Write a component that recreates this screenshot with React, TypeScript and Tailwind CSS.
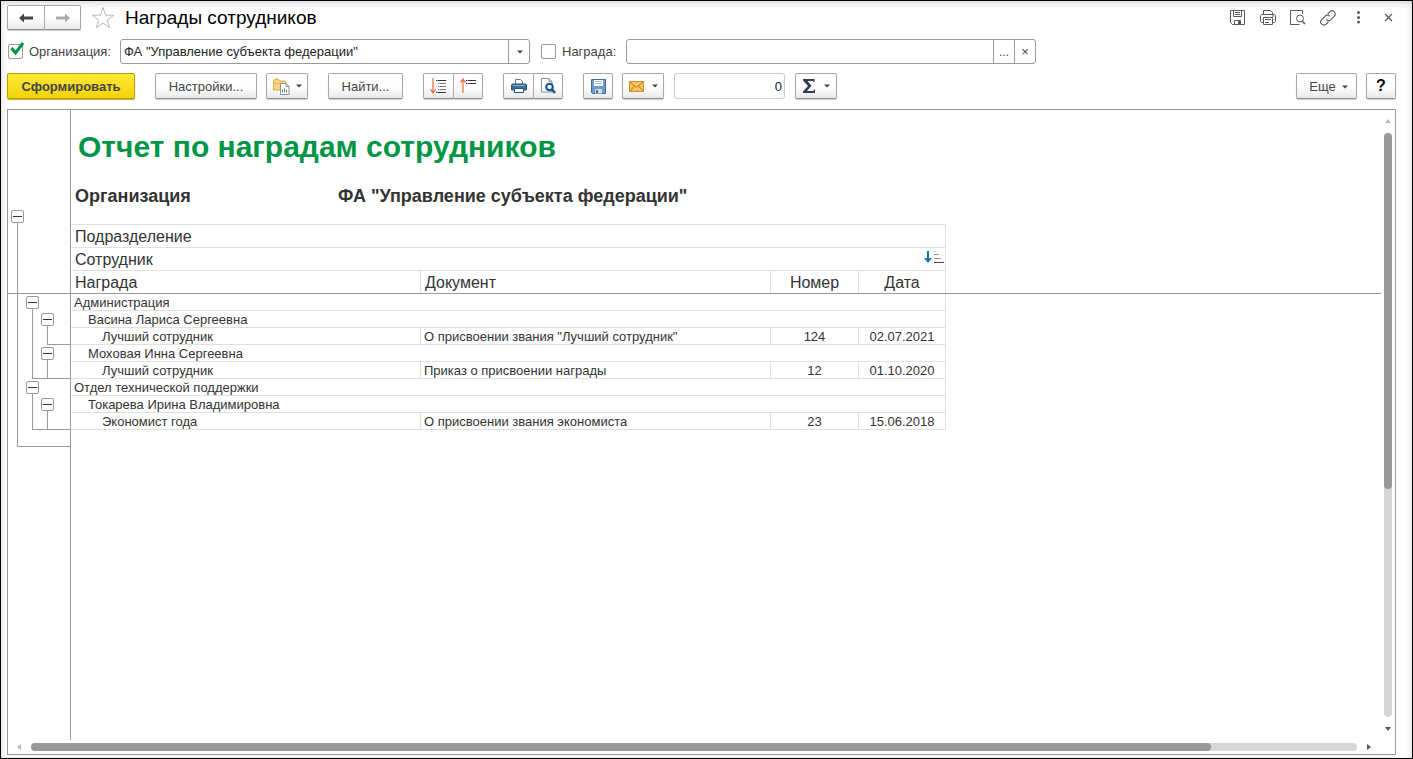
import { ButtonHTMLAttributes, ReactNode, useState } from "react";
import clsx from "clsx";

interface Award {
  title: string;
  document: string;
  number: string;
  date: string;
}

interface Employee {
  name: string;
  awards: Award[];
}

interface Department {
  name: string;
  employees: Employee[];
}

const departments: Department[] = [
  {
    name: "Администрация",
    employees: [
      {
        name: "Васина Лариса Сергеевна",
        awards: [
          {
            title: "Лучший сотрудник",
            document: 'О присвоении звания "Лучший сотрудник"',
            number: "124",
            date: "02.07.2021",
          },
        ],
      },
      {
        name: "Моховая Инна Сергеевна",
        awards: [
          {
            title: "Лучший сотрудник",
            document: "Приказ о присвоении награды",
            number: "12",
            date: "01.10.2020",
          },
        ],
      },
    ],
  },
  {
    name: "Отдел технической поддержки",
    employees: [
      {
        name: "Токарева Ирина Владимировна",
        awards: [
          {
            title: "Экономист года",
            document: "О присвоении звания экономиста",
            number: "23",
            date: "15.06.2018",
          },
        ],
      },
    ],
  },
];

/* ---------- icons ---------- */

const Arrow = ({ className }: { className?: string }) => (
  <svg width="14" height="10" viewBox="0 0 14 10" className={className}>
    <path d="M0 5l5-4.500v3H14v3H5v3z" fill="currentColor" />
  </svg>
);

const Caret = () => (
  <svg width="6" height="4" viewBox="0 0 6 4" className="shrink-0">
    <path d="M0 .5h6L3 3.500z" fill="#444" />
  </svg>
);

const StarIcon = () => (
  <svg width="24" height="24" viewBox="0 0 24 24">
    <path
      d="m12 1.500 2.700 7.700h8l-6.400 4.900 2.400 7.700-6.700-4.700-6.700 4.700 2.400-7.700L1.300 9.200h8z"
      fill="#fff"
      stroke="#b3b8bd"
    />
  </svg>
);

const FolderIcon = () => (
  <svg width="17" height="17" viewBox="0 0 17 17">
    <path d="M.5 12V3L2 1h3l1.500 2H12l1 1v8z" fill="#f7d57e" stroke="#dba741" />
    <path d="M1 5.500h11.500" stroke="#e3b452" />
    <path d="M7.500 5.500h5.500l3 3v8H7.500z" fill="#fff" stroke="#7d93a8" />
    <path d="M13 5.500v3h3" fill="none" stroke="#7d93a8" />
    <path d="M9.500 14.500v-3" stroke="#3b9b57" />
    <path d="M11.500 14.500v-4" stroke="#e0524b" />
    <path d="M13.500 14.500v-3" stroke="#3b9b57" />
  </svg>
);

const ExpandIcon = () => (
  <svg width="17" height="16" viewBox="0 0 17 16">
    <path d="M3 0v15M.5 11.500 3 15l2.500-3.500" fill="none" stroke="#f3743c" strokeWidth="1.300" />
    <path d="M6 2.500h1.500M8 2.500h8" stroke="#333" />
    <path d="M8 5.500h1.500M10 5.500h6M8 8.500h1.500M10 8.500h6M8 11.500h1.500M10 11.500h6" stroke="#777" />
    <path d="M6 14.500h1.500M8 14.500h8" stroke="#333" />
  </svg>
);

const CollapseIcon = () => (
  <svg width="17" height="16" viewBox="0 0 17 16">
    <path d="M3 15V1M.5 4.500 3 1l2.500 3.500" fill="none" stroke="#f3743c" strokeWidth="1.300" />
    <path d="M6 2.500h1.500M8 2.500h8M6 5.500h1.500M8 5.500h8" stroke="#333" />
  </svg>
);

const PrintIcon = () => (
  <svg width="16" height="14" viewBox="0 0 16 14">
    <path d="M4.500 6V.5h5l2 2V6" fill="#fff" stroke="#5d7c99" />
    <path d="M1.500 5h13l1 1v5h-15V6z" fill="#3f6f9f" stroke="#24527c" />
    <path d="M2 6.500h12" stroke="#8fb3d4" />
    <path d="M3.500 9.500h9v4h-9z" fill="#fff" stroke="#24527c" />
  </svg>
);

const PreviewIcon = () => (
  <svg width="15" height="16" viewBox="0 0 15 16">
    <path d="M.5.500H8l3 3v10.500H.5z" fill="#fff" stroke="#7d93a8" />
    <path d="M8 .5v3h3" fill="none" stroke="#7d93a8" />
    <circle cx="8.500" cy="9" r="3.300" fill="#e3eef6" stroke="#135283" strokeWidth="2" />
    <path d="m11 11.500 3 3.500" stroke="#135283" strokeWidth="2.500" />
  </svg>
);

const SaveIcon = () => (
  <svg width="15" height="15" viewBox="0 0 15 15">
    <path d="M.5.500h14v14H1.500l-1-1z" fill="#6f9bcb" stroke="#3f6c9e" />
    <path d="M3 1h9v6H3z" fill="#fff" />
    <path d="M4 2.500h7M4 4.500h7" stroke="#a9bfd6" />
    <path d="M4 10h7v4.500H4z" fill="#d8dde2" />
    <path d="M5 11h2v3H5z" fill="#3f6c9e" />
  </svg>
);

const MailIcon = () => (
  <svg width="15" height="11" viewBox="0 0 15 11">
    <path d="M.5.500h14v10H.5z" fill="#f6c566" stroke="#cd8e22" />
    <path d="m1 1 6.500 5.500L14 1M1 10l4.500-5M14 10 9.500 5" fill="none" stroke="#b87813" />
  </svg>
);

const SigmaIcon = () => (
  <svg width="13" height="14" viewBox="0 0 13 14">
    <path d="M0 0h11.500v3h-1L10 2H4.500l4 4.700L4 12h6.500l.5-1.500h1V14H0v-1.500L5 7 0 1.500z" fill="#2c3e50" />
  </svg>
);

const SortIcon = () => (
  <svg width="20" height="15" viewBox="0 0 20 15">
    <path d="M3 1h2v7h3l-4 5-4-5h3z" fill="#1c72b8" />
    <path d="M10 1.500h2" stroke="#a8ccd8" />
    <path d="M10 4.500h5M10 8.500h7" stroke="#999" />
    <path d="M10 12.500h10" stroke="#444" />
  </svg>
);

const TitleSave = () => (
  <svg width="16" height="16" viewBox="0 0 16 16" fill="none" stroke="#5a5a5a">
    <path d="M.5.500h14v14H2.500l-2-2zM3.500.500v6h8v-6M5 2.500h5M5 4.500h5M4.500 14.500v-4h6v4" />
    <path d="M8 11h2v3H8z" fill="#5a5a5a" stroke="none" />
  </svg>
);

const TitlePrint = () => (
  <svg width="16" height="16" viewBox="0 0 16 16" fill="none" stroke="#5a5a5a">
    <path d="M3.500 4.500v-4h7l2 2v2M3.500 12.500h-2l-1-1v-6l1-1h13l1 1v6l-1 1h-2M3.500 7.500h9v7h-9zM5 9.500h6M5 12.500h4M12 6h2" />
  </svg>
);

const TitlePreview = () => (
  <svg width="16" height="16" viewBox="0 0 16 16" fill="none" stroke="#5a5a5a">
    <path d="M12.500 4V.5H.5v14h9" />
    <circle cx="10" cy="8.500" r="3.500" />
    <path d="m12.300 11.300 2.700 2.700" strokeWidth="1.600" />
  </svg>
);

const TitleLink = () => (
  <svg width="16" height="16" viewBox="0 0 24 24" fill="none" stroke="#5a5a5a" strokeWidth="1.700">
    <path d="M9.500 14.500a5 5 0 0 0 7 0l5-5a4.600 4.600 0 0 0-6.800-6.800L11.500 6" />
    <path d="M14.500 9.500a5 5 0 0 0-7 0l-5 5a4.600 4.600 0 0 0 6.800 6.800l3.200-3.300" />
  </svg>
);

const TitleMore = () => (
  <svg width="16" height="16" viewBox="0 0 16 16" fill="#5a5a5a">
    <circle cx="8.500" cy="2.500" r="1.500" />
    <circle cx="8.500" cy="7.500" r="1.500" />
    <circle cx="8.500" cy="12" r="1.500" />
  </svg>
);

const TitleClose = () => (
  <svg width="16" height="16" viewBox="0 0 16 16" stroke="#5a5a5a" strokeWidth="1.200">
    <path d="m5 4 7 7M12 4l-7 7" />
  </svg>
);

const titleActions = [
  { label: "Сохранить", icon: <TitleSave /> },
  { label: "Печать", icon: <TitlePrint /> },
  { label: "Просмотр", icon: <TitlePreview /> },
  { label: "Получить ссылку", icon: <TitleLink /> },
  { label: "Действия", icon: <TitleMore /> },
  { label: "Закрыть", icon: <TitleClose /> },
];

/* ---------- controls ---------- */

const raised =
  "flex items-center justify-center border border-[#a6a6a6] border-b-[#8c8c8c] bg-linear-to-b from-white from-50% to-[#e9e9e9] shadow-[0_1px_1px_#d0d0d0]";

const ToolButton = ({
  className,
  children,
  ...rest
}: ButtonHTMLAttributes<HTMLButtonElement>) => (
  <button
    type="button"
    className={clsx(raised, "h-[26px] shrink-0 rounded-xs text-[#444]", className)}
    {...rest}
  >
    {children}
  </button>
);

const ButtonPair = ({ children }: { children: ReactNode }) => (
  <div className="flex shrink-0 [&>button:first-child]:rounded-r-none [&>button:last-child]:rounded-l-none [&>button:last-child]:border-l-0">
    {children}
  </div>
);

const Check = ({ id, defaultChecked }: { id: string; defaultChecked?: boolean }) => (
  <span className="relative flex size-[15px] shrink-0">
    <input
      id={id}
      type="checkbox"
      defaultChecked={defaultChecked}
      className="peer size-[15px] appearance-none rounded-xs border border-[#999] bg-white"
    />
    <svg
      viewBox="0 0 16 16"
      className="pointer-events-none absolute -top-1 left-0.5 hidden size-4 peer-checked:block"
    >
      <path d="m1.500 8 4 5L13 3" fill="none" stroke="#009646" strokeWidth="3" />
    </svg>
  </span>
);

/* A bracket in the outline: the toggle, the line below it and the hook to the right */
const Branch = ({ label, children }: { label: string; children: ReactNode }) => (
  <div className="flex">
    <div className="flex w-[15px] shrink-0 flex-col pt-0.5">
      <button
        type="button"
        aria-label={label}
        className="flex size-[13px] shrink-0 items-center justify-center rounded-xs border border-[#999] bg-white"
      >
        <span className="h-px w-[9px] bg-[#333]" />
      </button>
      <div className="ml-1.5 flex-1 border-b border-l border-[#999]" />
    </div>
    <div className="flex-1 shadow-[inset_0_-1px_0_#999]">{children}</div>
  </div>
);

const Outline = () => (
  <div className="w-[63px] shrink-0 border-r border-[#999] pt-[98px] pl-[3px]">
    <Branch label="Свернуть отчет">
      <div className="h-[86px]" />
      {departments.map((department) => (
        <Branch key={department.name} label={`Свернуть ${department.name}`}>
          <div className="h-[17px]" />
          {department.employees.map((employee) => (
            <Branch key={employee.name} label={`Свернуть ${employee.name}`}>
              <div className="h-[17px]" />
              {employee.awards.map((award) => (
                <div key={award.date} className="h-[17px]" />
              ))}
            </Branch>
          ))}
        </Branch>
      ))}
      <div className="h-[17px]" />
    </Branch>
  </div>
);

const head = "h-[23px] border-r border-b border-[#e0e0e0] px-1 pt-0.5 text-base/5 font-normal";
const cell = "h-[17px] border-r border-b border-[#e0e0e0] px-[3px] pt-0.5 text-[13px]/[14px]";

const ReportTable = () => (
  <table className="w-[875px] table-fixed border-separate border-spacing-0 border-t border-[#e0e0e0] text-left text-[#333]">
    <colgroup>
      <col className="w-[350px]" />
      <col className="w-[350px]" />
      <col className="w-[88px]" />
      <col className="w-[87px]" />
    </colgroup>
    <thead>
      <tr>
        <th colSpan={4} className={head}>
          Подразделение
        </th>
      </tr>
      <tr>
        <th colSpan={4} className={clsx(head, "pr-px")}>
          <div className="flex items-start justify-between">
            Сотрудник
            <SortIcon />
          </div>
        </th>
      </tr>
      <tr>
        <th className={head}>Награда</th>
        <th className={head}>Документ</th>
        <th className={clsx(head, "text-center")}>Номер</th>
        <th className={clsx(head, "text-center")}>Дата</th>
      </tr>
    </thead>
    {departments.map((department) => (
      <tbody key={department.name}>
        <tr>
          <td colSpan={4} className={cell}>
            {department.name}
          </td>
        </tr>
        {department.employees.map((employee) => [
          <tr key={employee.name}>
            <td colSpan={4} className={clsx(cell, "pl-[17px]")}>
              {employee.name}
            </td>
          </tr>,
          ...employee.awards.map((award) => (
            <tr key={employee.name + award.date}>
              <td className={clsx(cell, "pl-[31px]")}>{award.title}</td>
              <td className={cell}>{award.document}</td>
              <td className={clsx(cell, "text-center")}>{award.number}</td>
              <td className={clsx(cell, "text-center")}>{award.date}</td>
            </tr>
          )),
        ])}
      </tbody>
    ))}
  </table>
);

const App = () => {
  const [organization, setOrganization] = useState('ФА "Управление субъекта федерации"');
  const [award, setAward] = useState("");

  return (
    <div className="flex h-screen flex-col gap-[9px] overflow-hidden border border-black bg-white pt-1 pr-4 pb-[3px] pl-1.5 font-['Liberation_Sans',Arial,sans-serif] text-[13px] text-[#444] shadow-[inset_0_2px_7px_#d4d4d4]">
      <header className="flex h-[25px] items-center">
        <ButtonPair>
          <button type="button" aria-label="Назад" className={clsx(raised, "h-[25px] w-[38px] rounded-xs")}>
            <Arrow className="text-[#444]" />
          </button>
          <button type="button" aria-label="Вперед" className={clsx(raised, "h-[25px] w-9 rounded-xs")}>
            <Arrow className="rotate-180 text-[#aaa]" />
          </button>
        </ButtonPair>
        <button type="button" aria-label="Добавить в избранное" className="ml-2.5">
          <StarIcon />
        </button>
        <h1 className="ml-2.5 text-[19px]/6 text-black">Награды сотрудников</h1>
        <div className="ml-auto flex gap-3.5">
          {titleActions.map(({ label, icon }) => (
            <button key={label} type="button" aria-label={label}>
              {icon}
            </button>
          ))}
        </div>
      </header>

      <div className="flex h-[25px] items-center pl-px">
        <Check id="use-organization" defaultChecked />
        <label htmlFor="use-organization" className="ml-1.5 w-[91px] shrink-0">
          Организация:
        </label>
        <div className="relative flex h-[25px] w-[410px] items-center">
          <select
            aria-label="Организация"
            value={organization}
            onChange={(e) => setOrganization(e.target.value)}
            className="h-full w-full appearance-none rounded-[3px] border border-[#999] bg-white pr-6 pl-[3px] text-[#222]"
          >
            <option>ФА "Управление субъекта федерации"</option>
          </select>
          <span className="pointer-events-none absolute inset-y-0 right-0 flex w-[22px] items-center justify-center border-l border-[#999]">
            <Caret />
          </span>
        </div>
        <span className="w-[11px]" />
        <Check id="use-award" />
        <label htmlFor="use-award" className="ml-1.5 w-16 shrink-0">
          Награда:
        </label>
        <div className="flex h-[25px] w-[410px] overflow-hidden rounded-[3px] border border-[#999] bg-white">
          <input
            type="text"
            aria-label="Награда"
            value={award}
            onChange={(e) => setAward(e.target.value)}
            className="min-w-0 flex-1 px-[3px] text-[#222] outline-none"
          />
          <button type="button" aria-label="Выбрать" className="w-[21px] border-l border-[#999] text-xs">
            ...
          </button>
          <button
            type="button"
            aria-label="Очистить"
            onClick={() => setAward("")}
            className="w-[21px] border-l border-[#999]"
          >
            ×
          </button>
        </div>
      </div>

      <div className="flex h-[27px] shrink-0 items-start">
        <button
          type="button"
          className="h-[26px] w-32 shrink-0 rounded-xs border border-[#b89f00] bg-linear-to-b from-[#ffe934] to-[#f2d300] pt-0.5 font-bold text-[#444] shadow-[0_1px_1px_#b8a84a]"
        >
          Сформировать
        </button>
        <ToolButton className="ml-5 w-[102px] pt-0.5">Настройки...</ToolButton>
        <ToolButton className="ml-[9px] w-[42px] gap-1.5" aria-label="Варианты отчета">
          <FolderIcon />
          <Caret />
        </ToolButton>
        <ToolButton className="mx-5 w-[75px] pt-0.5">Найти...</ToolButton>
        <ButtonPair>
          <ToolButton className="w-[31px]" aria-label="Развернуть группы">
            <ExpandIcon />
          </ToolButton>
          <ToolButton className="w-[29px]" aria-label="Свернуть группы">
            <CollapseIcon />
          </ToolButton>
        </ButtonPair>
        <span className="w-5" />
        <ButtonPair>
          <ToolButton className="w-[31px]" aria-label="Печать">
            <PrintIcon />
          </ToolButton>
          <ToolButton className="w-[29px]" aria-label="Предварительный просмотр">
            <PreviewIcon />
          </ToolButton>
        </ButtonPair>
        <ToolButton className="ml-5 w-[30px]" aria-label="Сохранить">
          <SaveIcon />
        </ToolButton>
        <ToolButton className="ml-[9px] w-[42px] gap-2" aria-label="Отправить">
          <MailIcon />
          <Caret />
        </ToolButton>
        <input
          type="text"
          aria-label="Сумма"
          readOnly
          value="0"
          className="mx-2.5 h-[26px] w-[111px] rounded-[3px] border border-[#ccc] px-0.5 text-right text-[#222]"
        />
        <ToolButton className="w-[42px] gap-2" aria-label="Вычислить">
          <SigmaIcon />
          <Caret />
        </ToolButton>
        <ToolButton className="ml-auto w-[61px] gap-1.5 pt-0.5 pl-1">
          Еще
          <Caret />
        </ToolButton>
        <ToolButton className="ml-[9px] w-[30px] text-base/5 font-bold" aria-label="Справка">
          <span className="text-black">?</span>
        </ToolButton>
      </div>

      <main className="flex min-h-0 flex-1 flex-col border border-[#999]">
        <div className="flex min-h-0 flex-1">
          <div className="relative flex min-w-0 flex-1 overflow-hidden">
            <Outline />
            <section className="min-w-0 flex-1">
              <h2 className="h-[74px] pt-[21px] pl-[7px] text-3xl/8 font-bold text-[#009646]">
                Отчет по наградам сотрудников
              </h2>
              <div className="flex h-10 pl-1 text-lg/6 font-bold text-[#333]">
                <span className="w-[263px]">Организация</span>
                <span>ФА "Управление субъекта федерации"</span>
              </div>
              <ReportTable />
            </section>
            {/* edge of the frozen header */}
            <div className="absolute inset-x-0 top-[183px] h-px bg-[#999]" />
          </div>
          <div className="flex w-3.5 flex-col items-center">
            <svg width="6" height="4" viewBox="0 0 6 4" className="mt-[9px] mb-2.5">
              <path d="M0 4h6L3 0z" fill="#bbb" />
            </svg>
            <div className="w-2 flex-1 rounded-full bg-[#d6d6d6]">
              <div className="h-[61%] rounded-full bg-[#999]" />
            </div>
            <svg width="6" height="4" viewBox="0 0 6 4" className="mt-2.5 mb-[9px]">
              <path d="M0 0h6L3 4z" fill="#555" />
            </svg>
          </div>
        </div>
        <div className="flex h-3.5 items-center pr-6 pl-[9px]">
          <svg width="4" height="6" viewBox="0 0 4 6" className="mr-2.5">
            <path d="M4 0v6L0 3z" fill="#bbb" />
          </svg>
          <div className="h-2 flex-1 rounded-full bg-[#d6d6d6]">
            <div className="h-full w-[89%] rounded-full bg-[#999]" />
          </div>
          <svg width="4" height="6" viewBox="0 0 4 6" className="ml-2.5">
            <path d="M0 0v6l4-3z" fill="#555" />
          </svg>
        </div>
      </main>
    </div>
  );
};

export default App;
